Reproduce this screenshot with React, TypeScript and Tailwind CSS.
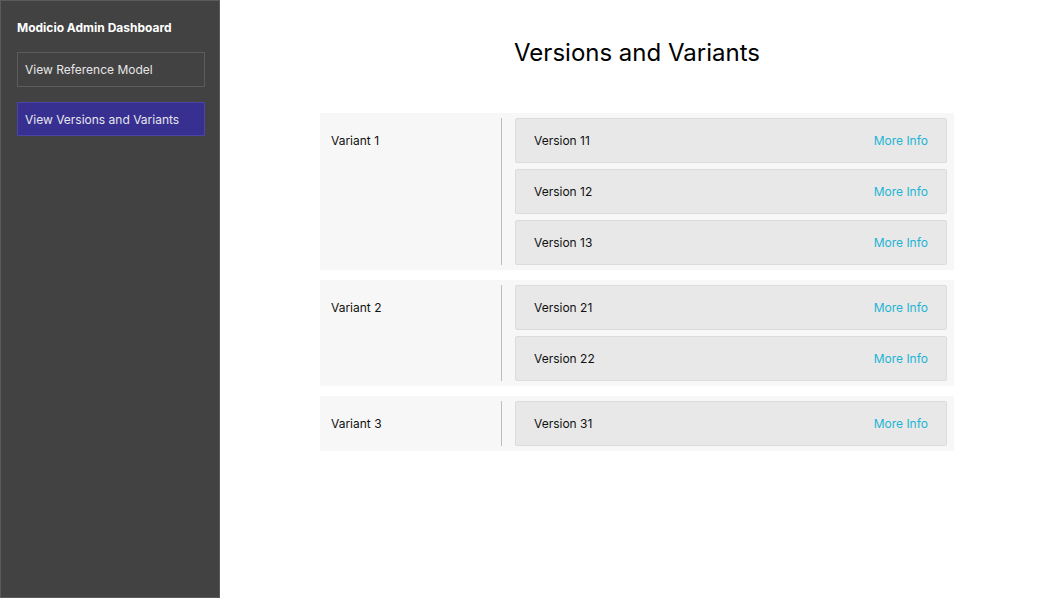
import React from 'react';

const variants = [
  { name: 'Variant 1', versions: ['Version 11', 'Version 12', 'Version 13'] },
  { name: 'Variant 2', versions: ['Version 21', 'Version 22'] },
  { name: 'Variant 3', versions: ['Version 31'] },
];

const App: React.FC = () => {
  return (
    <div className="flex h-[598px] w-[1054px] bg-white font-['Inter',sans-serif]">
      {/* Sidebar */}
      <div className="flex w-[220px] shrink-0 flex-col border border-[#5a5a5a] bg-[#424242] px-4 pt-[18px]">
        <h1 className="text-[12px] font-bold leading-[18px] text-white">Modicio Admin Dashboard</h1>
        <button className="mt-[15px] h-[35px] w-[188px] border border-[#5c5c5c] px-[7px] text-left text-[12px] text-[#e6e6e6]">
          View Reference Model
        </button>
        <button className="mt-[15px] h-[34px] w-[188px] border border-[#4a44a8] bg-[#383090] px-[7px] pt-[1px] text-left text-[12px] text-[#e6e6ee]">
          View Versions and Variants
        </button>
      </div>

      {/* Main */}
      <div className="flex flex-1 flex-col items-center">
        <h2 className="mt-[37px] text-[24px] leading-[32px] text-black">Versions and Variants</h2>

        <div className="mt-[44px] flex w-[634px] flex-col gap-[10px]">
          {variants.map((v) => (
            <div key={v.name} className="flex bg-[#f7f7f7] py-[5px] pr-[7px]">
              <div className="w-[182px] shrink-0 border-r border-[#bdbdbd] pl-[11px] pt-[15px] text-[12px] leading-[16px] text-[#111]">
                {v.name}
              </div>
              <div className="ml-[13px] flex flex-1 flex-col gap-[6px]">
                {v.versions.map((ver) => (
                  <div
                    key={ver}
                    className="flex h-[45px] items-center justify-between rounded-[2px] border border-[#dcdcdc] bg-[#e8e8e8] pl-[18px] pr-[18px] pt-[1px]"
                  >
                    <span className="text-[12px] text-[#111]">{ver}</span>
                    <span className="text-[12px] text-[#22b4d4]">More Info</span>
                  </div>
                ))}
              </div>
            </div>
          ))}
        </div>
      </div>
    </div>
  );
};

export default App;
